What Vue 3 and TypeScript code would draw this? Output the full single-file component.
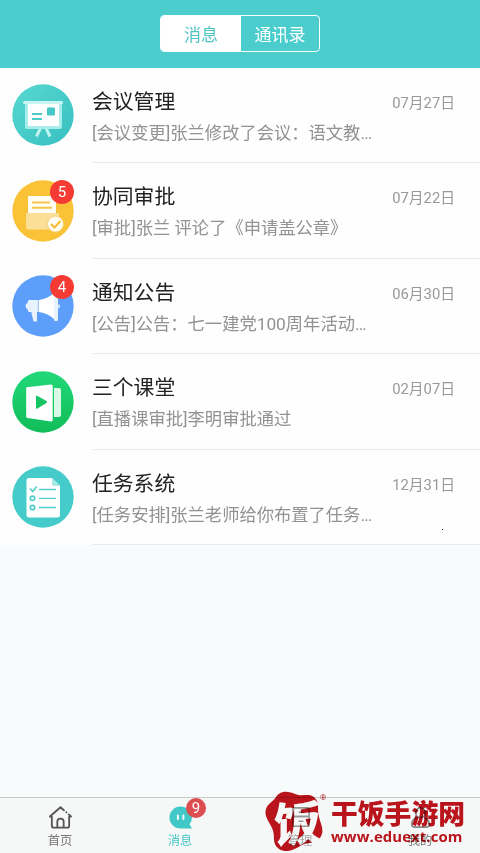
<script setup lang="ts">
interface Message {
  icon: 'board' | 'box' | 'horn' | 'video' | 'list'
  title: string
  text: string
  date: string
  badge?: number
}

const messages: Message[] = [
  { icon: 'board', title: '会议管理', text: '[会议变更]张兰修改了会议：语文教…', date: '07月27日' },
  { icon: 'box', title: '协同审批', text: '[审批]张兰 评论了《申请盖公章》', date: '07月22日', badge: 5 },
  { icon: 'horn', title: '通知公告', text: '[公告]公告：七一建党100周年活动…', date: '06月30日', badge: 4 },
  { icon: 'video', title: '三个课堂', text: '[直播课审批]李明审批通过', date: '02月07日' },
  { icon: 'list', title: '任务系统', text: '[任务安排]张兰老师给你布置了任务…', date: '12月31日' },
]
</script>

<template>
  <div class="screen">
    <header class="header">
      <div class="segments">
        <span class="segment active">消息</span>
        <span class="segment">通讯录</span>
      </div>
    </header>

    <main class="messages">
      <article v-for="m in messages" :key="m.title" class="row">
        <div class="avatar">
          <svg v-if="m.icon === 'board'" viewBox="0 0 62 62">
            <defs><linearGradient id="teal" x1="0" y1="0" x2="1" y2="1"><stop stop-color="#58d8d1" /><stop offset="1" stop-color="#37bfc0" /></linearGradient></defs>
            <circle cx="31" cy="31" r="30.7" fill="url(#teal)" />
            <path d="M28.500 44l-4 8.500M34 44l4 8.500" stroke="#bff4f1" stroke-width="3" />
            <rect x="13" y="19" width="37" height="26" rx="2" fill="#a7eeea" />
            <rect x="16" y="19" width="31" height="23" fill="#fff" />
            <rect x="11" y="17" width="40" height="3" rx="1.5" fill="#c8f5f2" />
            <rect x="35" y="23.500" width="8" height="8" rx="1" fill="#45c7c5" />
            <path d="M20 30h10M20 35h10" stroke="#4bcac8" stroke-width="2" />
          </svg>
          <svg v-else-if="m.icon === 'box'" viewBox="0 0 62 62">
            <circle cx="31" cy="31" r="30.7" fill="#fac237" />
            <path d="M13 35l3-4h28l3 4z" fill="#e7b645" />
            <path d="M16 16h24l4 4v17H16z" fill="#fffdf3" />
            <path d="M20 22.500h18M20 27.800h20" stroke="#f5c64f" stroke-width="2" />
            <path d="M14 33h33v14a2.500 2.500 0 0 1-2.500 2.500H16.500A2.500 2.500 0 0 1 14 47z" fill="#fbdf99" />
            <circle cx="43.500" cy="44" r="8" fill="#fffdf3" stroke="#f8d16d" />
            <path d="M39 44l3.500 3.500 6-6.500" fill="none" stroke="#f4bc36" stroke-width="2" />
          </svg>
          <svg v-else-if="m.icon === 'horn'" viewBox="0 0 62 62">
            <circle cx="31" cy="31" r="30.700" fill="#5c9efa" />
            <path d="M19 36h6v10.500h-3.500z" fill="#e8f2ff" />
            <path d="M16.500 25H26v12h-9.500l-1-3c-2.500-.5-2.500-5.500 0-6z" fill="#e8f3ff" />
            <path d="M26.500 25c6-.5 11-3 15.500-7v26c-4.500-4-9.500-6.500-15.500-7z" fill="#fff" />
            <rect x="42" y="15" width="4" height="31" rx="1.500" fill="#eaf4ff" />
            <path d="M46.500 29q3 2 0 5" fill="#fff" />
            <path d="M26.300 25v12" stroke="#a1c9fb" />
          </svg>
          <svg v-else-if="m.icon === 'video'" viewBox="0 0 62 62">
            <defs><linearGradient id="green" x1="0" y1="0" x2="0" y2="1"><stop stop-color="#22d879" /><stop offset="1" stop-color="#10bd58" /></linearGradient></defs>
            <circle cx="31" cy="31" r="30.700" fill="url(#green)" />
            <path d="M42 17h5q2 0 2 2v25q0 2-2 2h-5z" fill="#dbf9e7" />
            <path d="M14.500 16.200L39 13.500q1.700 0 1.700 1.500v34q0 1.500-1.700 1.500L15.800 47q-1.600-.3-1.600-1.700V17.500q0-1 .3-1.300z" fill="#fff" />
            <path d="M24 25.500q0-1.500 1.500-.6l9 5.200q1.400.9 0 1.800l-9 5.500q-1.500.8-1.500-.7z" fill="#17c663" />
          </svg>
          <svg v-else viewBox="0 0 62 62">
            <circle cx="31" cy="31" r="30.700" fill="#45cbca" />
            <path d="M17 12h23l8 8v29a2.500 2.500 0 0 1-2.500 2.500H17a2.500 2.500 0 0 1-2.500-2.500V14.500A2.500 2.500 0 0 1 17 12z" fill="#fff" />
            <path d="M40 12v6q0 2 2 2h6z" fill="#a6e7e5" />
            <path d="M27 23.500h17M27 32.300h17M27 41.500h17" stroke="#53cdcb" stroke-width="1.300" />
            <path d="M18 22.500l2.700 3 4-5" fill="none" stroke="#53cdcb" stroke-width="1.500" />
            <g fill="none" stroke="#53cdcb" stroke-width="1.700"><circle cx="20.500" cy="32.300" r="2.200" /><circle cx="20.500" cy="41.500" r="2.200" /></g>
          </svg>
          <span v-if="m.badge" class="badge">{{ m.badge }}</span>
        </div>
        <div class="content">
          <div class="top"><h2>{{ m.title }}</h2><time>{{ m.date }}</time></div>
          <p>{{ m.text }}</p>
        </div>
      </article>
      <i class="speck"></i>
    </main>

    <nav class="tabs">
      <div class="tab">
        <svg viewBox="0 0 26 26" fill="none" stroke="#555" stroke-width="1.900" stroke-linecap="round" stroke-linejoin="round">
          <path d="M16.500 5.500L13 2.300 2 12h2v9.500q0 2 2 2h14q2 0 2-2V12h2l-2.500-2.200M19 7.500l.2.200M9.700 23v-5.500a3.300 3.300 0 0 1 6.600 0V23" />
        </svg>
        <span>首页</span>
      </div>
      <div class="tab current">
        <svg viewBox="0 0 26 26">
          <path d="M13 1.500a11.500 11.500 0 1 0 0 23h12l-2.600-4.500A11.500 11.500 0 0 0 13 1.500z" fill="#42c9c7" />
          <path d="M10.300 11v3.500M16 11v3.500" stroke="#fff" stroke-width="2" stroke-linecap="round" />
        </svg>
        <span>消息</span>
        <b class="badge tab-badge">9</b>
      </div>
      <div class="tab faint">
        <svg viewBox="0 0 26 26" fill="none" stroke="#555" stroke-width="1.600">
          <rect x="5" y="3" width="17" height="9" rx="1" /><rect x="5" y="12" width="17" height="10" rx="1" /><path d="M11 7.500h5M11 17h5" />
        </svg>
        <span>管理</span>
      </div>
      <div class="tab">
        <svg viewBox="0 0 26 26" fill="none" stroke="#888" stroke-width="1.800">
          <circle cx="13" cy="8" r="5" /><path d="M9 13q-5 2-5 7 0 3 3 3h12q3 0 3-3 0-5-5-7" />
        </svg>
        <span>我的</span>
      </div>
    </nav>

    <div class="watermark">
      <div class="seal">
        <svg viewBox="0 0 64 64">
          <path d="M12 8C16 1 25 2 31 5c7 3 13-1 19 3 6 5 3 13 5 20 2 8 6 14 1 21-5 6-12 4-18 7-7 4-15 9-23 4-8-6-3-13-7-21C4 31 0 27 2 20c2-6 6-6 10-12z" fill="#c0141b" />
        </svg>
        <span class="seal-char">饭</span>
        <span class="registered">®</span>
      </div>
      <div class="brand"><strong>干饭手游网</strong><span>www.eduext.com</span></div>
    </div>
  </div>
</template>

<style>
body { margin: 0; overflow: hidden; }
</style>

<style scoped>
.screen { position: relative; display: flex; flex-direction: column; width: 480px; height: 853px; overflow: hidden; background: #f8fbfc; font-family: Roboto, "Noto Sans CJK SC", sans-serif; }
.header { display: flex; justify-content: center; box-sizing: border-box; height: 68px; flex: none; padding-top: 15px; background: #4bcdce; }
.segments { display: flex; box-sizing: border-box; width: 160px; height: 37px; border: 1.500px solid #f7ffff; border-radius: 4px; overflow: hidden; }
.segment { flex: 1; display: flex; align-items: center; justify-content: center; color: #fff; font-size: 17px; padding-bottom: 1px; }
.segment.active { flex: none; width: 80px; background: #fff; color: #4fc2c2; }
.messages { position: relative; background: #fefefe; height: 477px; flex: none; }
.row { display: flex; height: 95.500px; }
.avatar { position: relative; width: 62px; height: 62px; margin: 16px 18px 0 12px; }
.avatar svg { display: block; width: 62px; height: 62px; }
.badge { position: absolute; display: flex; align-items: center; justify-content: center; top: 0; right: 0; width: 24px; height: 24px; border-radius: 50%; background: #f63b34; color: #fff; font-size: 15px; }
.content { flex: 1; box-sizing: border-box; height: 95px; padding-top: 18.500px; border-bottom: 1px solid #e9eaea; }
.top { display: flex; justify-content: space-between; padding-right: 25px; height: 30px; }
h2 { margin: 0; font-size: 20.800px; font-weight: 400; line-height: 31px; color: #222; }
time { color: #999; font-size: 14.800px; line-height: 33px; }
p { margin: 3.400px 0 0; font-size: 17.300px; line-height: 26px; color: #929292; white-space: nowrap; }
.speck { position: absolute; left: 442px; top: 461px; width: 1px; height: 1px; background: #222; }
.tabs { display: grid; grid-template-columns: repeat(4, 1fr); box-sizing: border-box; height: 56px; margin-top: auto; border-top: 1px solid #c8caca; background: #f6f7f7; }
.tab { position: relative; display: flex; flex-direction: column; align-items: center; padding-top: 7px; font-size: 12.300px; color: #777; }
.tab svg { width: 25px; height: 25px; flex: none; }
.tab span { line-height: 18px; margin-top: 2px; }
.tab.current { color: #45c7c6; }
.tab.faint { opacity: .6; }
.tab-badge { top: 0; right: 34px; width: 20px; height: 20px; background: #dc4e50; font-weight: 400; }
.watermark { position: absolute; left: 264px; top: 789px; display: flex; gap: 3px; mix-blend-mode: multiply; }
.seal { position: relative; width: 64px; height: 64px; }
.seal svg { width: 64px; height: 64px; }
.seal-char { position: absolute; left: 10px; top: 7px; color: #fff; font: 900 47px/50px "Noto Sans CJK SC", sans-serif; transform: skewY(-4deg); }
.registered { position: absolute; left: 56px; top: 4px; color: #b72b30; font-size: 8px; }
.brand { display: flex; flex-direction: column; color: #c0141b; padding-top: 8px; }
.brand strong { font: 900 26.800px/32px "Noto Sans CJK SC", sans-serif; }
.brand span { font: bold 14.900px/14px "Open Sans", sans-serif; letter-spacing: .1px; }
</style>
